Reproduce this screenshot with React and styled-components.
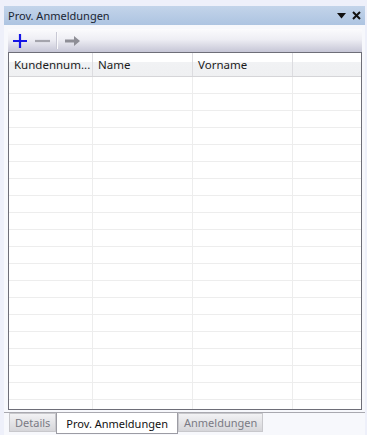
import styled, { createGlobalStyle } from 'styled-components';

const Global = createGlobalStyle`
  html, body {
    margin: 0;
    padding: 0;
    background: #eef0fa;
    font-family: "Noto Sans", "Liberation Sans", sans-serif;
    font-size: 11px;
    color: #1b1b1b;
  }
`;

const Window = styled.div`
  width: 367px;
  height: 435px;
  box-sizing: border-box;
  padding: 6px 2px 0 4px;
  display: flex;
  flex-direction: column;
  overflow: hidden;
`;

const TitleBar = styled.div`
  height: 19px;
  flex: none;
  display: flex;
  align-items: center;
  padding: 0 4px;
  background: linear-gradient(#c3d4ea, #adc4e1);
  font-size: 11px;
  color: #1a2533;
`;

const Title = styled.div`
  flex: 1;
`;

const TitleButtons = styled.div`
  display: flex;
  align-items: center;
  gap: 6px;
`;

const Body = styled.div`
  flex: 1;
  min-height: 0;
  display: flex;
  flex-direction: column;
  background: #f7f8fc;
  padding: 4px 3px 0 4px;
`;

const Toolbar = styled.div`
  height: 23px;
  flex: none;
  display: flex;
  align-items: center;
  padding: 0 4px;
  gap: 6px;
  background: linear-gradient(#fbfbfd 0%, #eeeef4 45%, #c6c6d6 100%);
`;

const ToolButton = styled.div`
  width: 16px;
  height: 16px;
  display: flex;
  align-items: center;
  justify-content: center;
`;

const Sep = styled.div`
  width: 1px;
  height: 17px;
  background: #c8c8d4;
  border-right: 1px solid #fafafc;
`;

const Grid = styled.div`
  flex: 1;
  min-height: 0;
  overflow: hidden;
  background: #fff;
  border: 1px solid #6e6e78;
  display: flex;
  flex-direction: column;
`;

const Row = styled.div`
  display: grid;
  grid-template-columns: 84px 100px 100px 1fr;
  box-sizing: border-box;
  height: ${p => (p.$header ? '24px' : '17px')};
  flex: none;
  background: ${p => (p.$header ? 'linear-gradient(#ffffff 0%, #ffffff 40%, #f1f2f4 41%, #eff0f2 100%)' : '#fff')};
  border-bottom: 1px solid ${p => (p.$header ? '#d5d5d8' : '#ededed')};
`;

const Cell = styled.div`
  border-right: 1px solid ${p => (p.$header ? '#dcdce0' : '#ededed')};
  padding-left: 5px;
  display: flex;
  align-items: center;
  white-space: nowrap;
  overflow: hidden;
  font-size: 11.5px;
  color: #1b1b1b;
  &:last-child {
    border-right: none;
  }
`;

const TabStrip = styled.div`
  height: 22px;
  flex: none;
  display: flex;
  align-items: flex-start;
  margin: 2px -3px 0 -4px;
  padding-left: 5px;
  border-top: 1px solid #a9a9b0;
`;

const Tab = styled.div`
  height: ${p => (p.$active ? '21px' : '19px')};
  padding: 0 ${p => (p.$active ? '9px' : '5px')};
  display: flex;
  align-items: center;
  font-size: 11px;
  box-sizing: border-box;
  color: ${p => (p.$active ? '#111' : '#7a7a84')};
  background: ${p => (p.$active ? '#fff' : 'linear-gradient(#f2f2f4, #d6d6da)')};
  border: 1px solid ${p => (p.$active ? '#9c9ca4' : '#c8c8cc')};
  border-top: ${p => (p.$active ? 'none' : '1px solid #c8c8cc')};
`;

const columns = ['Kundennum...', 'Name', 'Vorname', ''];

export default function App() {
  const rows = Array.from({ length: 22 });
  return (
    <>
      <Global />
      <Window>
        <TitleBar>
          <Title>Prov. Anmeldungen</Title>
          <TitleButtons>
            <svg width="9" height="6" viewBox="0 0 9 6"><path d="M0 0h9L4.5 5.5z" fill="#111" /></svg>
            <svg width="9" height="9" viewBox="0 0 9 9"><path d="M1 1l7 7M8 1L1 8" stroke="#111" strokeWidth="2" /></svg>
          </TitleButtons>
        </TitleBar>
        <Body>
          <Toolbar>
            <ToolButton>
              <svg width="14" height="14" viewBox="0 0 14 14"><path d="M7 0v14M0 7h14" stroke="#1414e6" strokeWidth="2.2" /></svg>
            </ToolButton>
            <ToolButton>
              <svg width="15" height="14" viewBox="0 0 15 14"><path d="M0 7h15" stroke="#a4a4ac" strokeWidth="2.2" /></svg>
            </ToolButton>
            <Sep />
            <ToolButton>
              <svg width="15" height="10" viewBox="0 0 15 10"><path d="M0 3.5h9V0l6 5-6 5V6.5H0z" fill="#8e8e96" /></svg>
            </ToolButton>
          </Toolbar>
          <Grid>
            <Row $header>
              {columns.map((c, i) => <Cell $header key={i}>{c}</Cell>)}
            </Row>
            {rows.map((_, r) => (
              <Row key={r}>
                {columns.map((_, i) => <Cell key={i} />)}
              </Row>
            ))}
          </Grid>
          <TabStrip>
            <Tab>Details</Tab>
            <Tab $active>Prov. Anmeldungen</Tab>
            <Tab>Anmeldungen</Tab>
          </TabStrip>
        </Body>
      </Window>
    </>
  );
}
